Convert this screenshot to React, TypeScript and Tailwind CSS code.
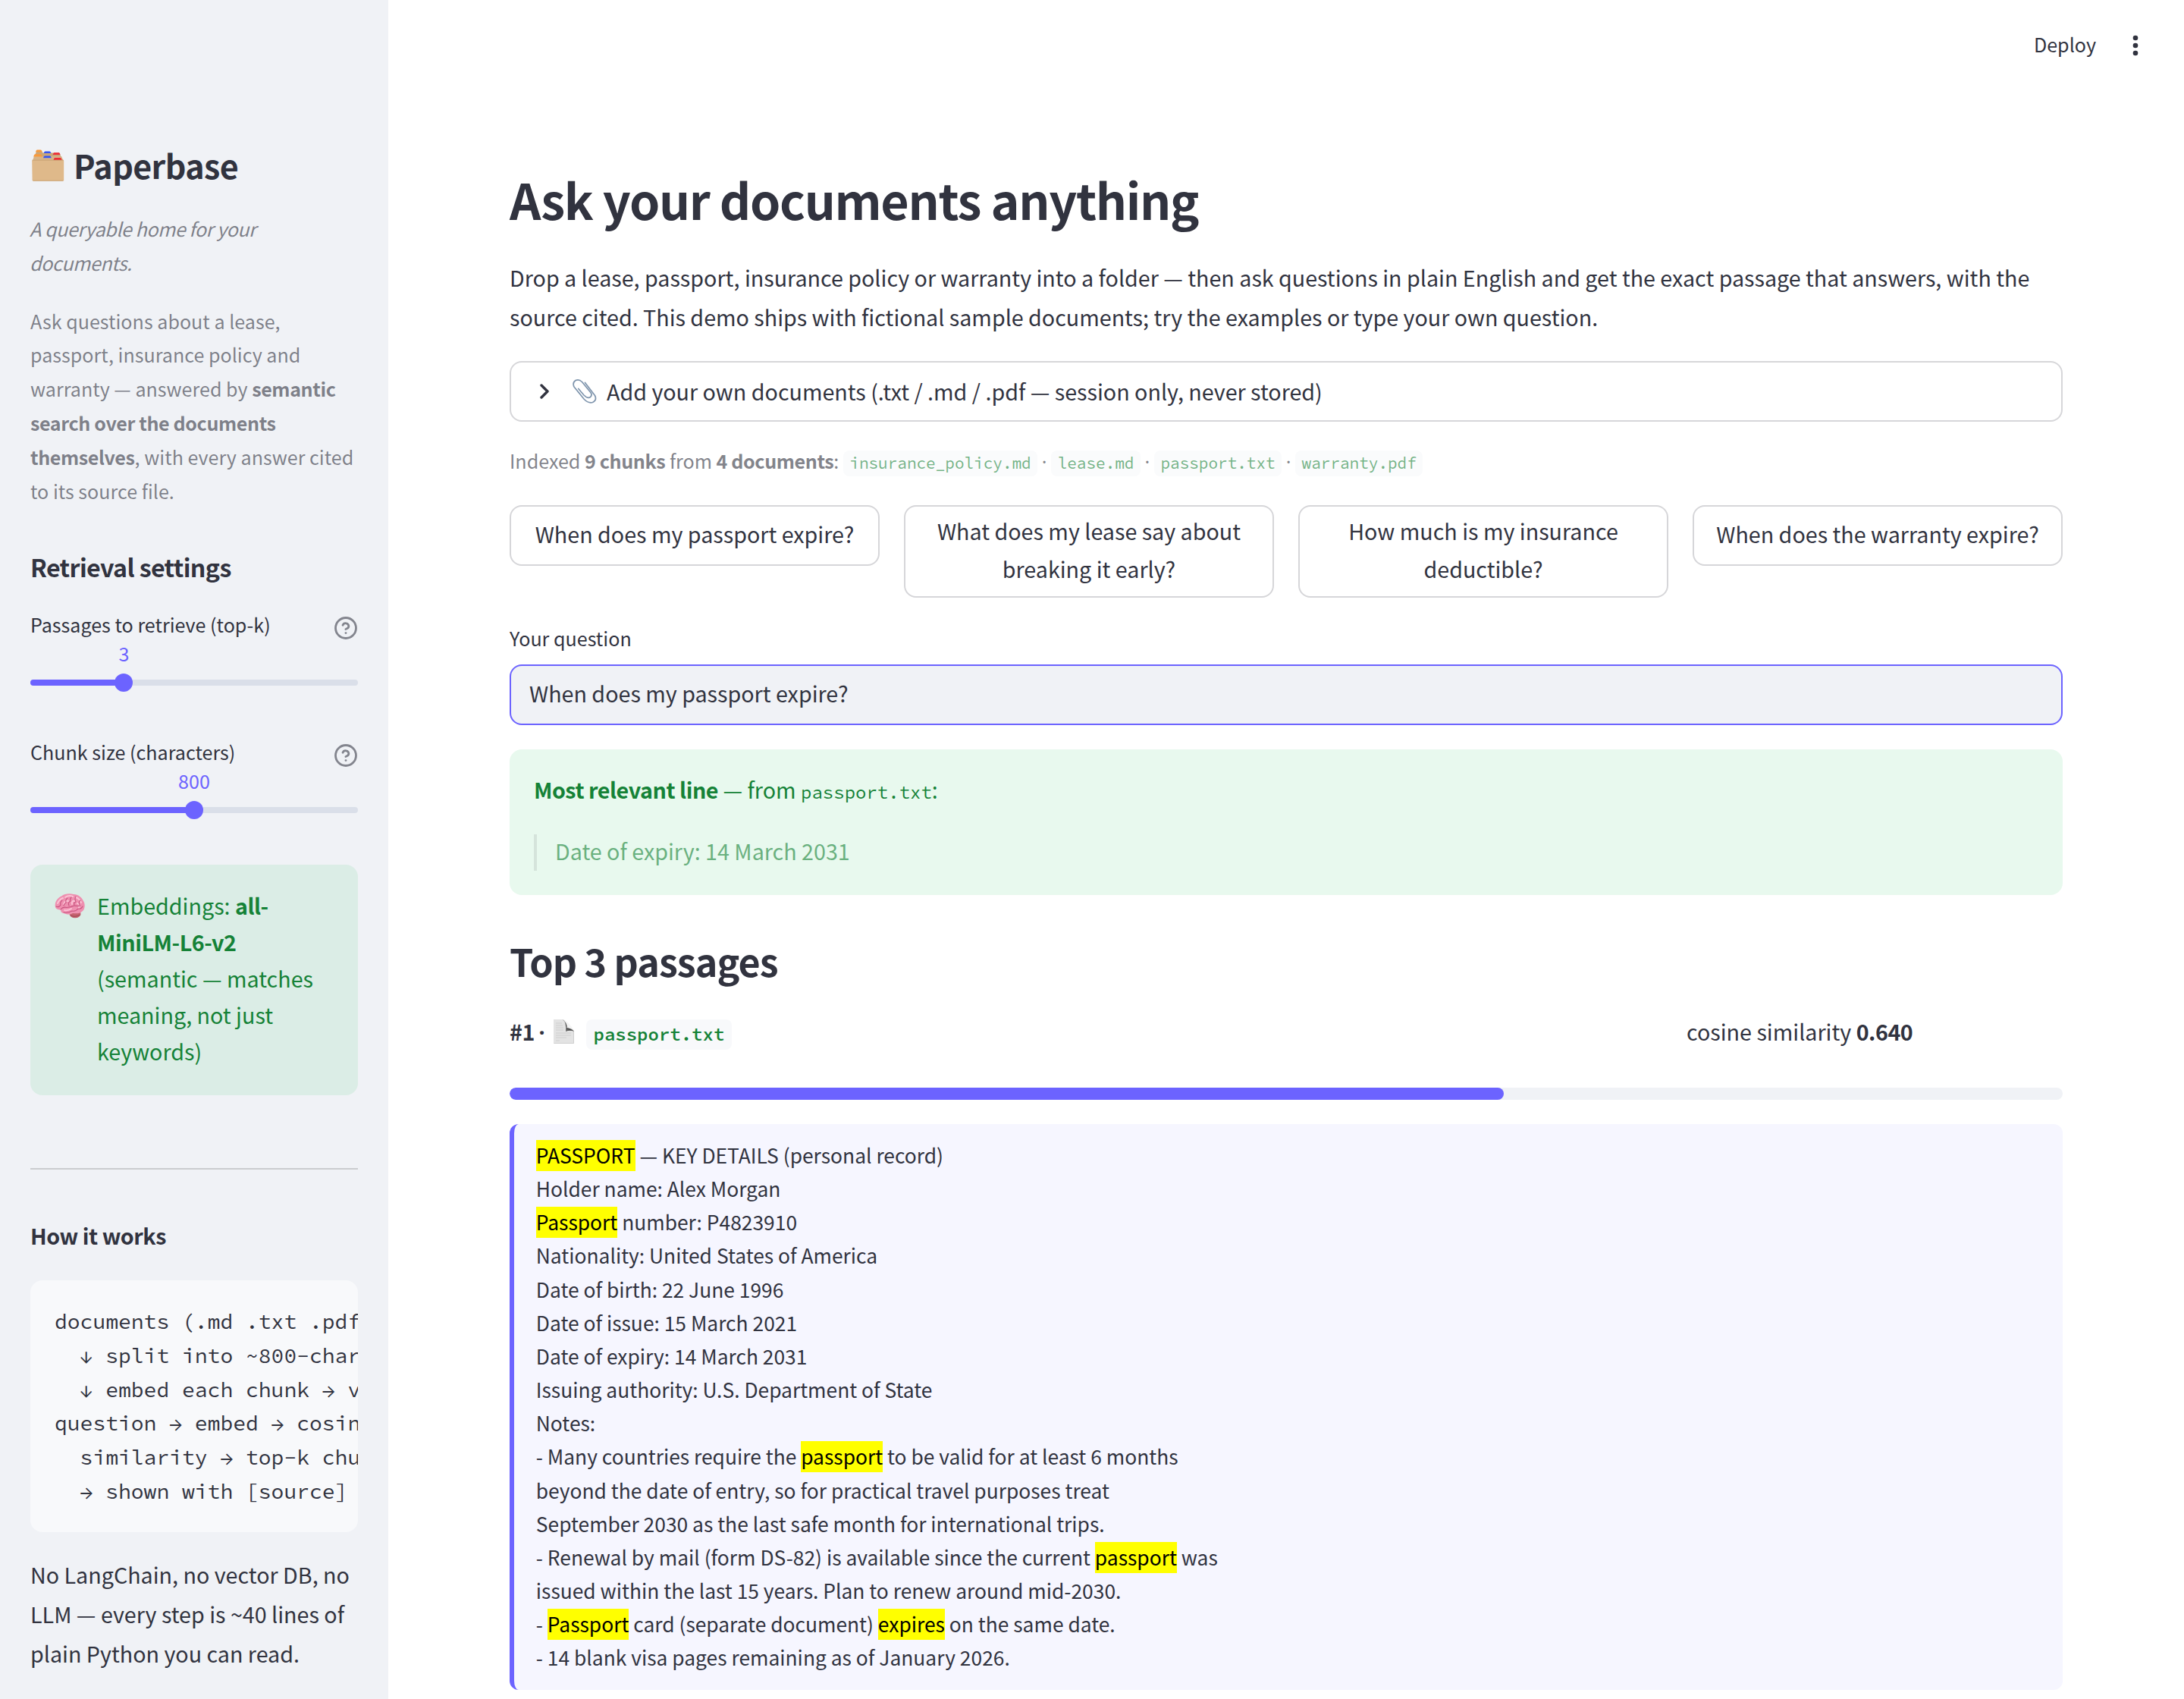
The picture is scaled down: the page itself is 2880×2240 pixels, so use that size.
import type { ReactNode } from "react";

function FolderIcon() {
  return (
    <svg className="mt-[3px] h-[44px] w-[46px] shrink-0" viewBox="0 0 46 44">
      <path d="M5 10 L8 3 Q8.500 2 9.500 2 H14.500 L16.500 4.500 H38 L43 14 V20 H3 Z" fill="#c9a679" />
      <path d="M6.800 3.600 L7.800 1.400 Q8.200 0.600 9 0.600 H13.500 Q14.400 0.600 14.900 1.500 L16 3.600Z" fill="#f79a3e" />
      <path d="M17.600 5 L18.600 3 Q19 2.400 19.700 2.400 H25.300 Q26 2.400 26.400 3 L27.500 5Z" fill="#3554f0" />
      <path d="M29.500 7 L30.500 5 Q30.900 4.300 31.600 4.300 H37.600 Q38.400 4.300 38.700 5 L39.600 7Z" fill="#ee2d35" />
      <path d="M5 9 H41 L43.300 14.500 H3Z" fill="#d8b488" />
      <path d="M4 9.400 L5.200 7 Q5.600 6.200 6.400 6.200 H13.600 Q14.500 6.200 14.800 7 L15.800 9.400Z" fill="#f79a3e" />
      <path d="M17 11.300 L18 9.300 Q18.400 8.600 19.100 8.600 H25.600 Q26.400 8.600 26.800 9.300 L27.800 11.300Z" fill="#3554f0" />
      <path d="M30.400 13.900 L31.400 11.800 Q31.800 11.100 32.500 11.100 H39.500 Q40.300 11.100 40.600 11.800 L41.800 13.900Z" fill="#ee2d35" />
      <path d="M2.200 15 Q2.200 14 3.200 14 H43.200 Q44.200 14 44.200 15 V40.300 Q44.200 41.600 42.900 41.600 H3.900 Q2.700 41.600 2.600 40.300Z" fill="#dfb98a" />
      <path d="M2.600 14.200 H43.800" stroke="#c39f70" strokeWidth="0.800" />
      <path d="M3.400 41.200 H43.400" stroke="#c79f6c" strokeWidth="0.900" />
    </svg>
  );
}

function BrainIcon() {
  return (
    <svg className="h-[34px] w-[40px]" viewBox="0 0 40 34">
      <ellipse cx="27" cy="28" rx="7.500" ry="5.200" fill="#c4616f" />
      <path
        d="M0.800 18 C0 12 4 6.500 9 4.500 C13 1 20 0.500 25 2 C31 2 36 6 38 11 C40.800 15 40 22 36.500 24.500 C33 28 28 27.500 24 27 C20 29.500 15 28.500 12 27 C8 26.500 8.500 24 8 22.500 C4.500 22.500 1.300 21.500 0.800 18Z"
        fill="#ee90b0"
      />
      <g fill="none" stroke="#fbc3d5" strokeWidth="2" strokeLinecap="round">
        <path d="M4 14 Q6 9 11 7" />
        <path d="M14 6 Q19 2.500 24 5" />
        <path d="M28 6 Q33 8 35 13" />
        <path d="M12 15 Q14 10 18 11" />
        <path d="M23 15 Q22 10 27 11" />
        <path d="M32 20 Q34 15 30 14" />
        <path d="M13 23 Q18 24 22 21" />
      </g>
      <g fill="none" stroke="#c9547f" strokeWidth="1.100" strokeLinecap="round">
        <path d="M2 18 Q6 20 8 16 Q7 12 10 10" />
        <path d="M8 22 Q11 18 16 19.500 Q22 19 26 17 Q31 18 34 17" />
        <path d="M12 17 Q13 14 15 13 Q14 9 17 7" />
        <path d="M19 17 Q17 13 21 11 Q20 8 22 6" />
        <path d="M26 16 Q25 13 28 12 Q26 8 28 5" />
        <path d="M33 16 Q31 12 34 10" />
        <path d="M12 26 Q18 27 23 24 Q28 25 31 21 Q35 22 37 18" />
      </g>
      <path d="M21 30 Q27 33 33.500 29" fill="none" stroke="#9f4552" strokeWidth="1" />
    </svg>
  );
}

function ClipIcon() {
  return (
    <svg className="h-[34px] w-[34px]" viewBox="0 0 34 34" fill="none">
      <path
        d="M8.800 13.500 L16 22 Q21 27 24.500 24.500 Q27.500 21.500 24.500 18 L13.500 4.500 Q9.500 0.500 5 2.500 Q0.500 5.500 3 11 L16 27 Q21.500 33 27.500 31.500 Q33.500 28.500 30.500 22.500 L17.500 5.500"
        stroke="#7f95ad"
        strokeWidth="1.700"
        strokeLinecap="round"
        strokeLinejoin="round"
      />
    </svg>
  );
}

function PageIcon() {
  return (
    <svg className="h-[32px] w-[27px]" viewBox="0 0 27 32">
      <defs>
        <linearGradient id="curl" x1="0" y1="1" x2="1" y2="0">
          <stop offset="0" stopColor="#8c8c8c" />
          <stop offset="0.400" stopColor="#4c4c4c" />
          <stop offset="1" stopColor="#d4d4d4" />
        </linearGradient>
      </defs>
      <path d="M0 0 H13 Q17 2 27 15 V32 H0Z" fill="#e3e3e3" />
      <path d="M14 0.500 Q21 5 26.500 14 L20 12Z" fill="#f4f4f4" />
      <path d="M0.500 31.500 H26.500 V16" fill="none" stroke="#d0d0d0" />
      <path d="M11.500 0 Q17.500 4 16 16 Q22 13.500 27 16 Q25 12 17.500 11 Q18 4 11.500 0Z" fill="url(#curl)" />
      <path d="M3 5h8M3 8h9M3 11h10M3 14h10M3 18h20M3 21h20M3 24h14M3 28h5" stroke="#cdcdcd" strokeWidth="0.900" />
    </svg>
  );
}

function HelpIcon() {
  return (
    <svg className="mt-[12px] mr-px h-[30px] w-[30px]" viewBox="0 0 30 30" fill="none" stroke="#83858e" strokeWidth="2.800" strokeLinecap="round" strokeLinejoin="round">
      <circle cx="15" cy="15" r="13.500" />
      <path d="M11 11.300 a4.100 4.100 0 0 1 7.900 1.300 c0 2.700 -4 3.900 -4 3.900" />
      <path d="M15 21.600 h0.010" />
    </svg>
  );
}

function Slider({ label, value, percent }: { label: string; value: string; percent: number }) {
  return (
    <div className="h-[168px]">
      <div className="flex h-[44px] items-start justify-between text-[25.1px] leading-[44px]">
        <span>{label}</span>
        <HelpIcon />
      </div>
      <div className="relative mt-px h-[30px] text-[25.1px] leading-[30px] text-[#6c63ff]">
        <span className="absolute top-0 -translate-x-1/2" style={{ left: `${percent}%` }}>
          {value}
        </span>
      </div>
      <div className="relative mt-[12px] flex h-6 items-center">
        <div className="h-2 w-full overflow-hidden rounded-full bg-[#dadfe9]">
          <div className="h-full bg-[#6c63ff]" style={{ width: `${percent}%` }} />
        </div>
        <div className="absolute top-0 size-6 -translate-x-1/2 rounded-full bg-[#6c63ff]" style={{ left: `${percent}%` }} />
      </div>
    </div>
  );
}

function B({ children }: { children: ReactNode }) {
  return <strong className="font-bold tracking-[-0.016em]">{children}</strong>;
}

function Sidebar() {
  return (
    <aside className="h-[2240px] w-[512px] shrink-0 overflow-hidden bg-[#f0f2f6] px-10 pt-[187px]">
      <h2 className="flex h-[60px] items-center text-[43px] leading-[60px] font-bold tracking-[-0.014em]">
        <FolderIcon />
        <span className="ml-[11px]">Paperbase</span>
      </h2>
      <p className="-ml-px mt-8 text-[25.1px] leading-[44.8px] tracking-[-0.018em] whitespace-nowrap text-[#31333f]/60 italic">
        A queryable home for your
        <br />
        documents.
      </p>
      <p className="mt-8 text-[25.1px] leading-[44.8px] whitespace-nowrap text-[#31333f]/60">
        Ask questions about a lease,
        <br />
        passport, insurance policy and
        <br />
        warranty — answered by <B>semantic</B>
        <br />
        <B>search over the documents</B>
        <br />
        <B>themselves</B>, with every answer cited
        <br />
        to its source file.
      </p>
      <h3 className="mt-[55.6px] mb-8 h-[44px] text-[32.2px] leading-[44px] font-bold tracking-[-0.02em]">Retrieval settings</h3>
      <Slider label="Passages to retrieve (top-k)" value="3" percent={28.571} />
      <Slider label="Chunk size (characters)" value="800" percent={50} />
      <div className="mt-[3px] flex h-[304px] rounded-2xl bg-[#dbede6] pt-[30px] pl-8 text-[28.68px] leading-[48px] whitespace-nowrap text-[#158237]">
        <div className="mt-[7px] mr-4 w-10">
          <BrainIcon />
        </div>
        <p>
          Embeddings: <B>all-</B>
          <br />
          <B>MiniLM-L6-v2</B>
          <br />
          (semantic — matches
          <br />
          meaning, not just
          <br />
          keywords)
        </p>
      </div>
      <hr className="mt-24 border-t-2 border-[#cacccf]" />
      <p className="mt-[61px] h-[51px] text-[28.68px] leading-[51px]">
        <B>How it works</B>
      </p>
      <pre className="mt-[34px] h-[332px] overflow-hidden rounded-2xl bg-[#f8f9fb] p-8 font-['Source_Code_Pro','DejaVu_Sans_Mono',monospace] text-[28px] leading-[44.8px]">
        {"documents (.md .txt .pdf)\n  ↓ split into ~800-char\n  ↓ embed each chunk → v\nquestion → embed → cosin\n  similarity → top-k chu\n  → shown with [source]"}
      </pre>
      <p className="mt-[30px] text-[28.68px] leading-[52px] whitespace-nowrap">
        No LangChain, no vector DB, no
        <br />
        LLM — every step is ~40 lines of
        <br />
        plain Python you can read.
      </p>
    </aside>
  );
}

const files = ["insurance_policy.md", "lease.md", "passport.txt", "warranty.pdf"];

function IndexSummary() {
  return (
    <div className="mt-[28.5px] flex h-[44.5px] items-baseline text-[25.1px] leading-[45px] whitespace-pre text-[#31333f] opacity-60">
      <span>
        Indexed <B>9 chunks</B> from <B>4 documents</B>:{" "}
      </span>
      {files.map((file, i) => (
        <span key={file} className="flex items-baseline">
          {i > 0 && <span className="w-[18.2px] text-center font-['Noto_Sans',sans-serif]">·</span>}
          <code className="rounded-lg bg-[#f8f9fb] px-[8.4px] py-[4px] font-['Source_Code_Pro','DejaVu_Sans_Mono',monospace] text-[21px] leading-[26.4px] text-[#158237]">{file}</code>
        </span>
      ))}
    </div>
  );
}

function Example({ lines }: { lines: string[] }) {
  return (
    <button className="flex min-h-[80px] flex-col items-center justify-center rounded-2xl border-2 border-[#d6d6d9] bg-white pt-[6.5px] pb-[11.5px] text-[28.68px] leading-[50px] whitespace-nowrap">
      {lines.map((line) => (
        <span key={line}>{line}</span>
      ))}
    </button>
  );
}

function Mark({ children }: { children: ReactNode }) {
  return <mark className="bg-[#ffff00] pb-[2px] text-black">{children}</mark>;
}

function Passage() {
  return (
    <div className="mt-8 h-[746px] rounded-xl border-l-[6px] border-[#6c63ff] bg-[#f6f6ff] pt-[19px] pl-[28.8px] text-[26.38px] leading-[44.16px] whitespace-pre">
      <div><Mark>PASSPORT</Mark> — KEY DETAILS (personal record)</div>
      <div>Holder name: Alex Morgan</div>
      <div><Mark>Passport</Mark> number: P4823910</div>
      <div>Nationality: United States of America</div>
      <div>Date of birth: 22 June 1996</div>
      <div>Date of issue: 15 March 2021</div>
      <div>Date of expiry: 14 March 2031</div>
      <div>Issuing authority: U.S. Department of State</div>
      <div>Notes:</div>
      <div>- Many countries require the <Mark>passport</Mark> to be valid for at least 6 months</div>
      <div>beyond the date of entry, so for practical travel purposes treat</div>
      <div>September 2030 as the last safe month for international trips.</div>
      <div>- Renewal by mail (form DS-82) is available since the current <Mark>passport</Mark> was</div>
      <div>issued within the last 15 years. Plan to renew around mid-2030.</div>
      <div>- <Mark>Passport</Mark> card (separate document) <Mark>expires</Mark> on the same date.</div>
      <div>- 14 blank visa pages remaining as of January 2026.</div>
    </div>
  );
}

export default function App() {
  return (
    <div className="flex h-[2240px] w-[2880px] overflow-hidden bg-white font-['Noto_Sans_CJK_SC','Noto_Sans',sans-serif] text-[#31333f]">
      <Sidebar />
      <div className="flex-1">
        <header className="flex h-[219px] items-start justify-end pt-[35.5px] pr-[54px]">
          <span className="text-[25.1px] leading-[44px]">Deploy</span>
          <svg className="mt-[8.5px] ml-[42px] h-8 w-5" viewBox="0 0 20 32" fill="#31333f">
            <circle cx="10" cy="6" r="3.300" />
            <circle cx="10" cy="16" r="3.300" />
            <circle cx="10" cy="26" r="3.300" />
          </svg>
        </header>
        <main className="mx-40 w-[2048px]">
          <h1 className="h-[86px] text-[64.5px] leading-[86px] font-bold tracking-[-0.0207em] whitespace-nowrap">Ask your documents anything</h1>
          <p className="mt-[35px] h-[104px] text-[28.67px] leading-[51.8px] whitespace-nowrap">
            Drop a lease, passport, insurance policy or warranty into a folder — then ask questions in plain English and get the exact passage that answers, with the
            <br />
            source cited. This demo ships with fictional sample documents; try the examples or type your own question.
          </p>
          <div className="mt-8 flex h-20 items-center rounded-2xl border-2 border-[#d6d6d9] pl-[36px] text-[28.68px]">
            <svg className="h-5 w-4" viewBox="0 0 16 20" fill="none" stroke="#31333f" strokeWidth="3.400" strokeLinecap="round" strokeLinejoin="round">
              <path d="M4 2 12 10 4 18" />
            </svg>
            <span className="ml-[28px]">
              <ClipIcon />
            </span>
            <span className="ml-[12px]">Add your own documents (.txt / .md / .pdf — session only, never stored)</span>
          </div>
          <IndexSummary />
          <div className="mt-[37px] grid h-[122px] grid-cols-4 items-start gap-8">
            <Example lines={["When does my passport expire?"]} />
            <Example lines={["What does my lease say about", "breaking it early?"]} />
            <Example lines={["How much is my insurance", "deductible?"]} />
            <Example lines={["When does the warranty expire?"]} />
          </div>
          <div className="mt-[31px] h-[44px] text-[25.1px] leading-[44px]">Your question</div>
          <div className="mt-[13px] h-20 rounded-2xl border-2 border-[#6c63ff] bg-[#f0f2f6] pl-6 text-[28.68px] leading-[71px]">When does my passport expire?</div>
          <div className="mt-8 h-[192px] rounded-2xl bg-[#e8f9ee] px-8 pt-[29px] text-[28.68px] text-[#158237]">
            <p className="h-[48px] leading-[48px] whitespace-nowrap">
              <B>Most relevant line</B> — from <code className="font-['Source_Code_Pro','DejaVu_Sans_Mono',monospace] text-[24px]">passport.txt</code>:
            </p>
            <blockquote className="mt-[35px] h-12 border-l-4 border-[#31333f]/10 pl-6 leading-[43px]">
              <span className="opacity-60">Date of expiry: 14 March 2031</span>
            </blockquote>
          </div>
          <h2 className="mt-[52px] h-[68px] text-[50.2px] leading-[68px] font-bold tracking-[-0.019em]">Top 3 passages</h2>
          <div className="mt-[34px] flex h-[51px] items-baseline text-[28.68px] leading-[51px]">
            <div className="flex w-[1552px] items-baseline">
              <B>#1</B>
              <span className="w-[19px] text-center font-['Noto_Sans',sans-serif] font-bold">·</span>
              <span className="ml-[6px] translate-y-[4px]">
                <PageIcon />
              </span>
              <code className="ml-4 rounded-lg bg-[#f8f9fb] px-[9.6px] py-[5px] font-['Source_Code_Pro','DejaVu_Sans_Mono',monospace] text-[24px] leading-[30px] font-semibold text-[#158237]">passport.txt</code>
            </div>
            <div className="whitespace-nowrap">
              cosine similarity <B>0.640</B>
            </div>
          </div>
          <div className="mt-[49px] h-4 overflow-hidden rounded-lg bg-[#f0f2f6]">
            <div className="h-full w-[64%] rounded-lg bg-[#6c63ff]" />
          </div>
          <Passage />
        </main>
      </div>
    </div>
  );
}
